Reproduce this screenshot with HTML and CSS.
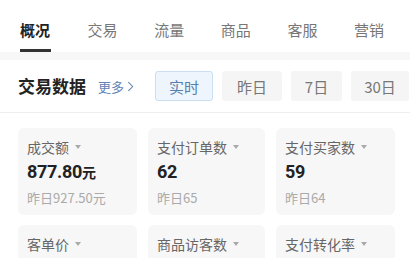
FILE: index.html
```html
<!DOCTYPE html>
<html lang="zh">
<head>
<meta charset="utf-8">
<link rel="stylesheet" href="styles.css">
</head>
<body>
<div class="page">
  <nav class="tabs">
    <div class="tab active">概况</div>
    <div class="tab">交易</div>
    <div class="tab">流量</div>
    <div class="tab">商品</div>
    <div class="tab">客服</div>
    <div class="tab">营销</div>
  </nav>
  <div class="band"></div>
  <div class="header">
    <div class="title">交易数据</div>
    <div class="more">更多<svg class="chev" viewBox="0 0 8 12" width="7" height="11"><path d="M1.5 1 L6.5 6 L1.5 11" fill="none" stroke="currentColor" stroke-width="1.2"/></svg></div>
    <div class="ranges">
      <div class="range on">实时</div>
      <div class="range w60">昨日</div>
      <div class="range w50">7日</div>
      <div class="range">30日</div>
    </div>
  </div>
  <div class="cards">
    <div class="card">
      <div class="label">成交额<span class="caret"></span></div>
      <div class="value">877.80<span class="unit">元</span></div>
      <div class="sub">昨日927.50元</div>
    </div>
    <div class="card">
      <div class="label">支付订单数<span class="caret"></span></div>
      <div class="value">62</div>
      <div class="sub">昨日65</div>
    </div>
    <div class="card">
      <div class="label">支付买家数<span class="caret"></span></div>
      <div class="value">59</div>
      <div class="sub">昨日64</div>
    </div>
    <div class="card short">
      <div class="label">客单价<span class="caret"></span></div>
    </div>
    <div class="card short">
      <div class="label">商品访客数<span class="caret"></span></div>
    </div>
    <div class="card short">
      <div class="label">支付转化率<span class="caret"></span></div>
    </div>
  </div>
</div>
</body>
</html>
```
FILE: styles.css
```css
html, body {
  margin: 0;
  padding: 0;
  background: #fff;
}
body {
  font-family: "Noto Sans CJK SC", "Noto Sans", sans-serif;
  width: 418px;
  height: 258px;
  overflow: hidden;
}
.page {
  width: 410px;
}
.tabs {
  display: flex;
  height: 52px;
  padding-left: 20px;
  gap: 36.6px;
  box-sizing: border-box;
}
.tab {
  font-size: 15px;
  line-height: 20px;
  padding-top: 20px;
  color: #777;
  width: 30px;
  white-space: nowrap;
  box-sizing: border-box;
  height: 52px;
}
.tab.active {
  color: #222;
  font-weight: 700;
  border-bottom: 3px solid #333;
  width: 31px;
}
.band {
  height: 8px;
  background: #f7f7f7;
}
.header {
  display: flex;
  align-items: center;
  height: 52px;
  padding-left: 18px;
  border-bottom: 1px solid #eeeeee;
}
.title {
  font-size: 17px;
  font-weight: 700;
  color: #222;
  line-height: 24px;
}
.more {
  display: flex;
  align-items: center;
  margin-left: 12px;
  font-size: 13px;
  color: #6283b4;
  gap: 3px;
}
.chev {
  display: block;
}
.ranges {
  display: flex;
  margin-left: 21px;
  gap: 9px;
}
.range {
  width: 58px;
  height: 30px;
  box-sizing: border-box;
  background: #f5f5f5;
  border-radius: 3px;
  font-size: 15px;
  color: #777;
  display: flex;
  align-items: center;
  justify-content: center;
}
.range.w60 { width: 60px; }
.range.w50 { width: 51px; }
.range.on {
  background: #eef5fc;
  border: 1px solid #c9def0;
  color: #5580b0;
}
.cards {
  display: grid;
  grid-template-columns: 119px 117px 119px;
  column-gap: 11px;
  row-gap: 10px;
  padding: 15px 0 0 18px;
}
.card {
  background: #f7f7f7;
  border-radius: 6px;
  padding: 9px 0 5px 9px;
  height: 87px;
  box-sizing: border-box;
}
.card.short {
  height: 33px;
  border-radius: 6px 6px 0 0;
}
.label {
  font-size: 14px;
  line-height: 20px;
  color: #666;
  display: flex;
  align-items: center;
}
.caret {
  width: 0;
  height: 0;
  border-left: 3.5px solid transparent;
  border-right: 3.5px solid transparent;
  border-top: 4px solid #aaa;
  margin-left: 6px;
}
.value {
  font-family: "Roboto", "Noto Sans CJK SC", sans-serif;
  font-size: 18px;
  font-weight: 700;
  line-height: 30px;
  color: #222;
  letter-spacing: -0.3px;
}
.unit {
  font-family: "Noto Sans CJK SC", sans-serif;
  font-size: 14px;
  letter-spacing: 0;
}
.sub {
  font-size: 13px;
  line-height: 22px;
  color: #aaa;
}
```
